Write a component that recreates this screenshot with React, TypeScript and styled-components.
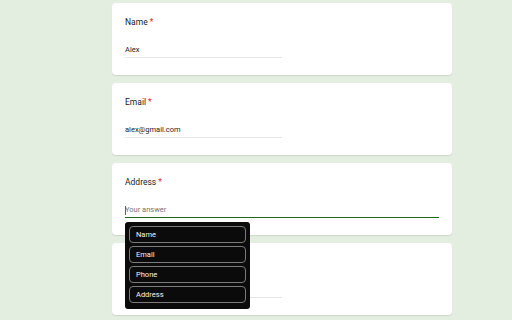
import styled, { createGlobalStyle } from "styled-components";

const GlobalStyle = createGlobalStyle`
  html, body {
    margin: 0;
    padding: 0;
    background: #e3ede0;
    font-family: Roboto, "Liberation Sans", Arial, sans-serif;
  }
`;

const Page = styled.div`
  width: 512px;
  height: 320px;
  overflow: hidden;
  padding: 3px 0 0 112px;
  box-sizing: border-box;
`;

const Column = styled.div`
  width: 340px;
  display: flex;
  flex-direction: column;
  gap: 8px;
`;

const Card = styled.div<{ $raised?: boolean }>`
  position: relative;
  z-index: ${(p) => (p.$raised ? 2 : 1)};
  height: 72px;
  box-sizing: border-box;
  padding: 13px 13px 0 13px;
  background: #fff;
  border-radius: 4px;
  box-shadow: 0 1px 1px rgba(60, 64, 67, 0.12);
`;

const Label = styled.div`
  height: 12px;
  font-size: 8.5px;
  line-height: 12px;
  color: #202124;
`;

const Star = styled.span`
  color: #d93025;
  margin-left: 2px;
`;

const Field = styled.div<{ $focused?: boolean }>`
  margin-top: 16px;
  width: ${(p) => (p.$focused ? "100%" : "50%")};
  height: 12px;
  padding-bottom: 1px;
  display: flex;
  align-items: center;
  font-size: 7.5px;
  line-height: 12px;
  color: #202124;
  border-bottom: 1px solid ${(p) => (p.$focused ? "#1e6b16" : "#e6e6e6")};
`;

const Placeholder = styled.span`
  color: #70757a;
`;

const Caret = styled.span`
  display: inline-block;
  width: 1px;
  height: 9px;
  background: #5f6368;
  margin-right: -1px;
`;

const Menu = styled.div`
  position: absolute;
  left: 13px;
  top: 59px;
  width: 125px;
  box-sizing: border-box;
  padding: 4px 4px 6px 4px;
  background: #0b0b0b;
  border-radius: 3px;
  display: flex;
  flex-direction: column;
  gap: 3.5px;
`;

const MenuItem = styled.div`
  height: 16.5px;
  box-sizing: border-box;
  border: 1px solid #7b7b7b;
  border-radius: 4px;
  padding-left: 6px;
  display: flex;
  align-items: center;
  font-size: 7.5px;
  font-weight: 400;
  color: #f4f4f4;
`;

const menuItems = ["Name", "Email", "Phone", "Address"];

export default function App() {
  return (
    <>
      <GlobalStyle />
      <Page>
        <Column>
          <Card>
            <Label>
              Name<Star>*</Star>
            </Label>
            <Field>Alex</Field>
          </Card>
          <Card>
            <Label>
              Email<Star>*</Star>
            </Label>
            <Field>alex@gmail.com</Field>
          </Card>
          <Card $raised>
            <Label>
              Address<Star>*</Star>
            </Label>
            <Field $focused>
              <Caret />
              <Placeholder>Your answer</Placeholder>
            </Field>
            <Menu>
              {menuItems.map((item) => (
                <MenuItem key={item}>{item}</MenuItem>
              ))}
            </Menu>
          </Card>
          <Card>
            {/* label of this card sits under the open menu */}
            <Label />
            <Field />
          </Card>
        </Column>
      </Page>
    </>
  );
}
